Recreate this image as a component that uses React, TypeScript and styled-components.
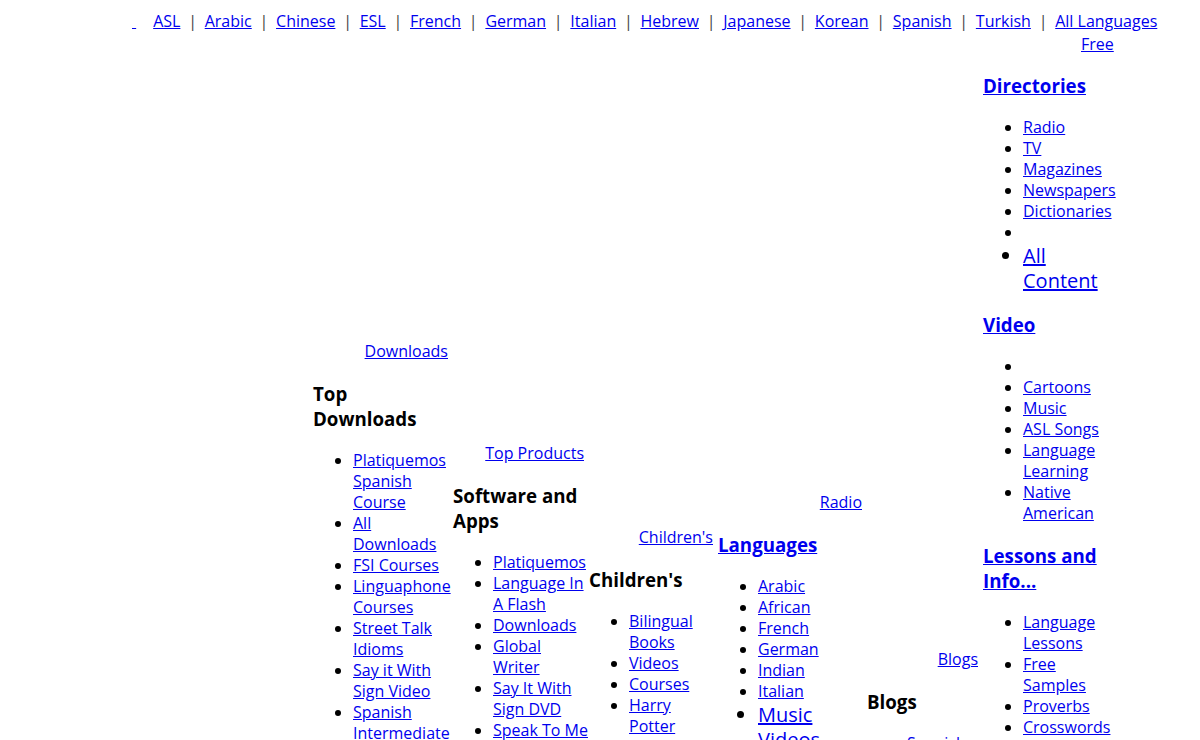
import styled, { createGlobalStyle } from 'styled-components';

const GlobalStyle = createGlobalStyle`
  body {
    margin: 0;
    background: #fff;
    color: #000;
    font-family: "Open Sans", "Noto Sans", sans-serif;
    font-size: 16px;
  }
  a {
    color: #0000ee;
  }
`;

const Page = styled.div`
  width: 1200px;
  height: 740px;
  overflow: hidden;
`;

const TopNav = styled.div`
  padding: 11px 0 0 132px;
  line-height: 21px;
  white-space: nowrap;
`;

const NavLinks = styled.span`
  margin-left: 17px;
`;

const Sep = styled.span`
  margin: 0 7.75px;
  color: #444;
`;

const NavNote = styled.div`
  padding-left: 1081px;
  margin-top: 2px;
  line-height: 21px;
`;

const Main = styled.div`
  display: flex;
  align-items: flex-start;
  padding-left: 313px;
`;

const Column = styled.div<{ $top: number; $width: number }>`
  flex: none;
  margin-top: ${(p) => p.$top}px;
  width: ${(p) => p.$width}px;
`;

const TabLabel = styled.a`
  display: block;
  text-align: right;
  padding-right: 5px;
  line-height: 21px;
`;

const Heading = styled.h3<{ $first?: boolean }>`
  margin: ${(p) => (p.$first ? 0 : 19)}px 0 19px;
  font-size: 18.72px;
  line-height: 25px;
  font-weight: 700;
`;

const List = styled.ul`
  margin: 0;
  padding-left: 40px;
  line-height: 21px;
`;

const Item = styled.li<{ $big?: boolean }>`
  font-size: ${(p) => (p.$big ? '20px' : '16px')};
  line-height: ${(p) => (p.$big ? '25px' : '21px')};
`;

const navLinks = ['ASL', 'Arabic', 'Chinese', 'ESL', 'French', 'German', 'Italian', 'Hebrew', 'Japanese', 'Korean', 'Spanish', 'Turkish', 'All Languages'];

type Entry = string | { text: string; big?: boolean } | null;

function Links({ items }: { items: Entry[] }) {
  return (
    <List>
      {items.map((it, i) => {
        if (it === null) return <Item key={i} />;
        const e = typeof it === 'string' ? { text: it } : it;
        return (
          <Item key={i} $big={e.big}>
            <a href="#">{e.text}</a>
          </Item>
        );
      })}
    </List>
  );
}

const columns = [
  {
    label: 'Downloads', title: 'Top Downloads', top: 286, width: 140,
    items: ['Platiquemos Spanish Course', 'All Downloads', 'FSI Courses', 'Linguaphone Courses', 'Street Talk Idioms', 'Say it With Sign Video', 'Spanish Intermediate'],
  },
  {
    label: 'Top Products', title: 'Software and Apps', top: 388, width: 136,
    items: ['Platiquemos', 'Language In A Flash', 'Downloads', 'Global Writer', 'Say It With Sign DVD', 'Speak To Me'],
  },
  {
    label: "Children's", title: "Children's", top: 472, width: 129,
    items: ['Bilingual Books', 'Videos', 'Courses', 'Harry Potter'],
  },
  {
    label: 'Radio', title: 'Languages', linked: true, top: 437, width: 149,
    items: ['Arabic', 'African', 'French', 'German', 'Indian', 'Italian', { text: 'Music Videos', big: true }],
  },
  {
    label: 'Blogs', title: 'Blogs', top: 594, width: 116,
    items: ['Spanish'],
  },
];

function App() {
  return (
    <Page>
      <GlobalStyle />
      <TopNav>
        <a href="#">&nbsp;</a>
        <NavLinks>
          {navLinks.map((l, i) => (
            <span key={l}>
              {i > 0 && <Sep>|</Sep>}
              <a href="#">{l}</a>
            </span>
          ))}
        </NavLinks>
      </TopNav>
      <NavNote>
        <a href="#">Free</a>
      </NavNote>
      <Main>
        {columns.map((c) => (
          <Column key={c.title} $top={c.top} $width={c.width}>
            <TabLabel href="#">{c.label}</TabLabel>
            <Heading>{c.linked ? <a href="#">{c.title}</a> : c.title}</Heading>
            <Links items={c.items} />
          </Column>
        ))}
        <Column $top={18} $width={137}>
          <Heading $first>
            <a href="#">Directories</a>
          </Heading>
          <Links items={['Radio', 'TV', 'Magazines', 'Newspapers', 'Dictionaries', null, { text: 'All Content', big: true }]} />
          <Heading>
            <a href="#">Video</a>
          </Heading>
          <Links items={[null, 'Cartoons', 'Music', 'ASL Songs', 'Language Learning', 'Native American']} />
          <Heading>
            <a href="#">Lessons and Info...</a>
          </Heading>
          <Links items={['Language Lessons', 'Free Samples', 'Proverbs', 'Crosswords', 'Idioms']} />
        </Column>
      </Main>
    </Page>
  );
}

export default App;
